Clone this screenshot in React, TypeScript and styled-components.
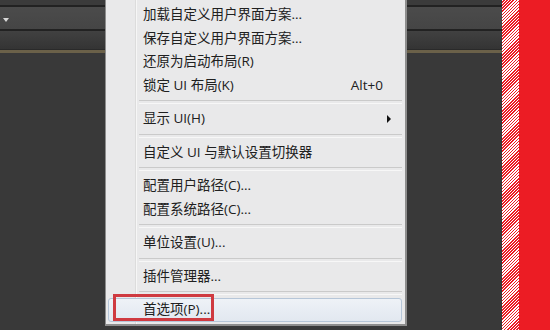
import React from 'react';
import styled, {createGlobalStyle} from 'styled-components';

const GlobalStyle = createGlobalStyle`
  html, body {
    margin: 0;
    padding: 0;
    width: 550px;
    height: 330px;
    overflow: hidden;
    background: #393939;
  }
  * {
    box-sizing: border-box;
  }
`;

type MenuEntry =
    | { kind: 'item'; label: string; shortcut?: string; submenu?: boolean; hover?: boolean }
    | { kind: 'sep' };

const entries: MenuEntry[] = [
    {kind: 'item', label: '加载自定义用户界面方案...'},
    {kind: 'item', label: '保存自定义用户界面方案...'},
    {kind: 'item', label: '还原为启动布局(R)'},
    {kind: 'item', label: '锁定 UI 布局(K)', shortcut: 'Alt+0'},
    {kind: 'sep'},
    {kind: 'item', label: '显示 UI(H)', submenu: true},
    {kind: 'sep'},
    {kind: 'item', label: '自定义 UI 与默认设置切换器'},
    {kind: 'sep'},
    {kind: 'item', label: '配置用户路径(C)...'},
    {kind: 'item', label: '配置系统路径(C)...'},
    {kind: 'sep'},
    {kind: 'item', label: '单位设置(U)...'},
    {kind: 'sep'},
    {kind: 'item', label: '插件管理器...'},
    {kind: 'sep'},
    {kind: 'item', label: '首选项(P)...', hover: true},
];

export default function App() {
    return (
        <>
            <GlobalStyle/>
            <Screen>
                <Workspace>
                    <TopStrip/>
                    <DarkLine/>
                    <Toolbar>
                        <DropArrow/>
                    </Toolbar>
                    <DarkLine/>
                    <TabBar/>
                    <TanLine/>
                    <Viewport/>
                </Workspace>
                <Hatch/>
                <RedBlock/>

                <Menu>
                    <Gutter/>
                    {entries.map((e, i) =>
                        e.kind === 'sep'
                            ? <Separator key={i}/>
                            : <Item key={i} $hover={e.hover}>
                                <Label>{e.label}</Label>
                                {e.shortcut && <Shortcut>{e.shortcut}</Shortcut>}
                                {e.submenu && <SubArrow/>}
                            </Item>
                    )}
                </Menu>
                <Callout/>
            </Screen>
        </>
    );
}

const Screen = styled.div`
  position: relative;
  width: 550px;
  height: 330px;
  display: flex;
  overflow: hidden;
`;

const Workspace = styled.div`
  flex: 0 0 502px;
  display: flex;
  flex-direction: column;
  background: #393939;
`;

const TopStrip = styled.div`
  height: 5px;
  background: #3b3b3b;
`;

const DarkLine = styled.div`
  height: 2px;
  background: #222222;
`;

const Toolbar = styled.div`
  height: 22px;
  background: linear-gradient(#4b4b4b, #454545);
  display: flex;
  align-items: flex-end;
  padding: 0 0 7px 3px;
`;

const DropArrow = styled.div`
  width: 0;
  height: 0;
  border-left: 3px solid transparent;
  border-right: 3px solid transparent;
  border-top: 4px solid #d8d8d8;
`;

const TabBar = styled.div`
  height: 19px;
  background: linear-gradient(#414141, #343434);
  border-bottom: 1px solid #2a2a2a;
`;

const TanLine = styled.div`
  height: 3px;
  background: #6b6149;
`;

const Viewport = styled.div`
  flex: 1;
  background: #393939;
`;

const Hatch = styled.div`
  flex: 0 0 17px;
  background: repeating-linear-gradient(135deg, #ffffff 0 1.1px, #ec1c24 1.1px 2.2px);
`;

const RedBlock = styled.div`
  flex: 1;
  background: #ec1c24;
`;

const Menu = styled.div`
  position: absolute;
  left: 105px;
  top: -1px;
  width: 302px;
  padding: 3px 3px 2px 2px;
  background: #e9e9ea;
  border: 1px solid #8d8d8d;
  border-right-width: 2px;
  border-bottom-width: 2px;
  display: flex;
  flex-direction: column;
  font-family: "Segoe UI", "Open Sans", "Noto Sans CJK SC", sans-serif;
  font-size: 13.5px;
  color: #202020;
`;

const Gutter = styled.div`
  position: absolute;
  left: 29px;
  top: 0;
  bottom: 0;
  width: 2px;
  border-left: 1px solid #dcdcdc;
  border-right: 1px solid #f6f6f6;
`;

const Item = styled.div<{ $hover?: boolean }>`
  position: relative;
  height: 23.5px;
  display: flex;
  align-items: center;
  padding: 0 18px 0 34px;
  border: 1px solid ${p => p.$hover ? '#b6c6d8' : 'transparent'};
  border-radius: 3px;
  background: ${p => p.$hover ? 'linear-gradient(#eef2f7, #e2e8f0)' : 'transparent'};
`;

const Label = styled.span`
  flex: 1;
  white-space: nowrap;
  line-height: 1;
`;

const Shortcut = styled.span`
  white-space: nowrap;
  line-height: 1;
`;

const SubArrow = styled.div`
  position: absolute;
  right: 10px;
  top: 50%;
  margin-top: -4px;
  width: 0;
  height: 0;
  border-top: 4px solid transparent;
  border-bottom: 4px solid transparent;
  border-left: 4px solid #111;
`;

const Separator = styled.div`
  height: 10px;
  margin-left: 31px;
  display: flex;
  align-items: center;

  &::before {
    content: '';
    flex: 1;
    height: 2px;
    border-top: 1px solid #cacaca;
    border-bottom: 1px solid #f7f7f7;
  }
`;

const Callout = styled.div`
  position: absolute;
  left: 113px;
  top: 294px;
  width: 101px;
  height: 27px;
  border: 3px solid #cf3a40;
`;
